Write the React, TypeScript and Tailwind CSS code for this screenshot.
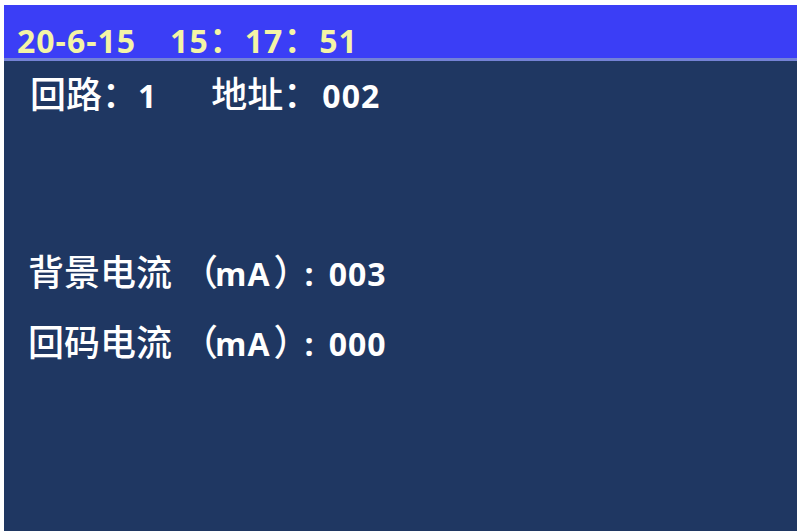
import React from "react";

const C = ({ children, className = "" }: { children: React.ReactNode; className?: string }) => (
  <span className={"font-['Noto_Sans_CJK_SC','Noto_Sans_CJK_JP',sans-serif] text-[36px] font-medium leading-none " + className}>
    {children}
  </span>
);

const L = ({ children, className = "" }: { children: React.ReactNode; className?: string }) => (
  <span className={"font-['Open_Sans','Liberation_Sans',sans-serif] text-[32px] font-bold tracking-[1px] leading-none " + className}>
    {children}
  </span>
);

const CurrentRow = ({ label, value, className = "" }: { label: string; value: string; className?: string }) => (
  <div className={"-ml-[2px] " + className}>
    <C>{label}</C>
    <C className="ml-[10px] tracking-[-4px]">（</C>
    <L className="ml-[1px]">mA</L>
    <C className="ml-[3px] tracking-[-12px]">）</C>
    <L className="ml-[7px] tracking-normal">:</L>
    <L className="ml-[15px]">{value}</L>
  </div>
);

export default function App() {
  return (
    <div className="h-[531px] w-[800px] overflow-hidden bg-white pt-[5px] pl-[4px] pr-[3px]">
      <div className="flex h-full flex-col bg-[#1f3762]">
        <div className="h-[56px] border-b-[3px] border-[#7482d6] bg-[#3b3ef6] pl-[13px] pt-[14px] font-['Open_Sans',sans-serif] text-[32px] leading-none text-[#f4f4a6] whitespace-nowrap">
          <L>20-6-15</L>
          <L className="ml-[34px]">15</L>
          <C>：</C>
          <L>17</L>
          <C>：</C>
          <L>51</L>
        </div>
        <div className="flex flex-col pl-[26px] text-white font-['Open_Sans',sans-serif] text-[32px] leading-none whitespace-nowrap">
          <div className="mt-[13px]">
            <C>回路：</C>
            <L>1</L>
            <C className="ml-[54px]">地址：</C>
            <L className="ml-[3px]">002</L>
          </div>
          <CurrentRow label="背景电流" value="003" className="mt-[140px]" />
          <CurrentRow label="回码电流" value="000" className="mt-[32px]" />
        </div>
      </div>
    </div>
  );
}
